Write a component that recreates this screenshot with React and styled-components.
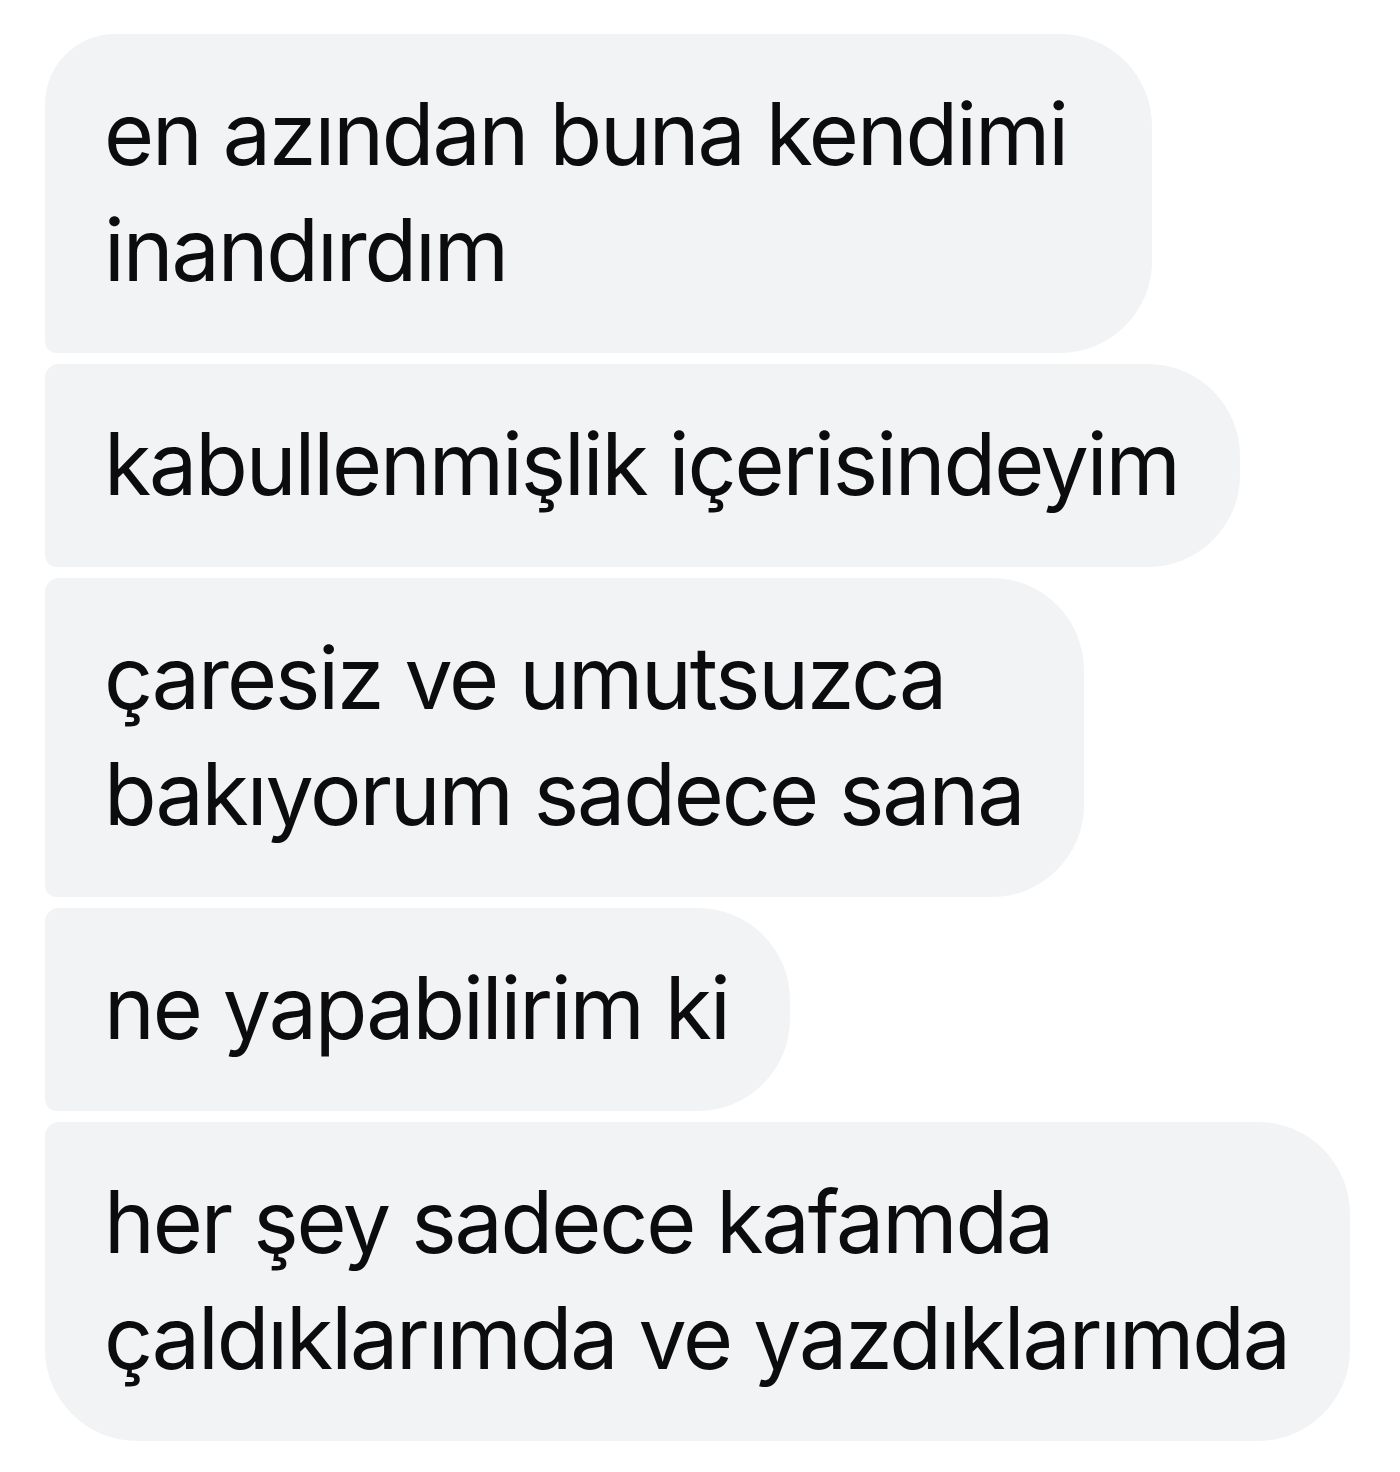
import React from 'react';
import styled, { createGlobalStyle } from 'styled-components';

const GlobalStyle = createGlobalStyle`
  html, body {
    margin: 0;
    padding: 0;
    background: #ffffff;
  }
  body {
    font-family: Inter, "Noto Sans", "Liberation Sans", sans-serif;
  }
`;

const Thread = styled.div`
  display: flex;
  flex-direction: column;
  align-items: flex-start;
  gap: 11px;
  padding: 34px 0 0 45px;
  width: 1400px;
  height: 1472px;
  box-sizing: border-box;
`;

const Bubble = styled.div`
  box-sizing: border-box;
  background: #f2f3f5;
  color: #0c0c0e;
  font-size: 86px;
  line-height: 116px;
  letter-spacing: -2.1px;
  white-space: nowrap;
  padding: 42px ${({ $padRight }) => $padRight || 61}px 45px 59px;
  border-radius: ${({ $first }) => ($first ? 70 : 14)}px 92px 92px
    ${({ $last }) => ($last ? 92 : 12)}px;
`;

const Line = styled.div``;

const messages = [
  { lines: ['en azından buna kendimi', 'inandırdım'], padRight: 85 },
  { lines: ['kabullenmişlik içerisindeyim'] },
  { lines: ['çaresiz ve umutsuzca', 'bakıyorum sadece sana'] },
  { lines: ['ne yapabilirim ki'] },
  { lines: ['her şey sadece kafamda', 'çaldıklarımda ve yazdıklarımda'] },
];

export default function App() {
  return (
    <>
      <GlobalStyle />
      <Thread>
        {messages.map((m, i) => (
          <Bubble
            key={i}
            $first={i === 0}
            $last={i === messages.length - 1}
            $padRight={m.padRight}
          >
            {m.lines.map((l) => (
              <Line key={l}>{l}</Line>
            ))}
          </Bubble>
        ))}
      </Thread>
    </>
  );
}
